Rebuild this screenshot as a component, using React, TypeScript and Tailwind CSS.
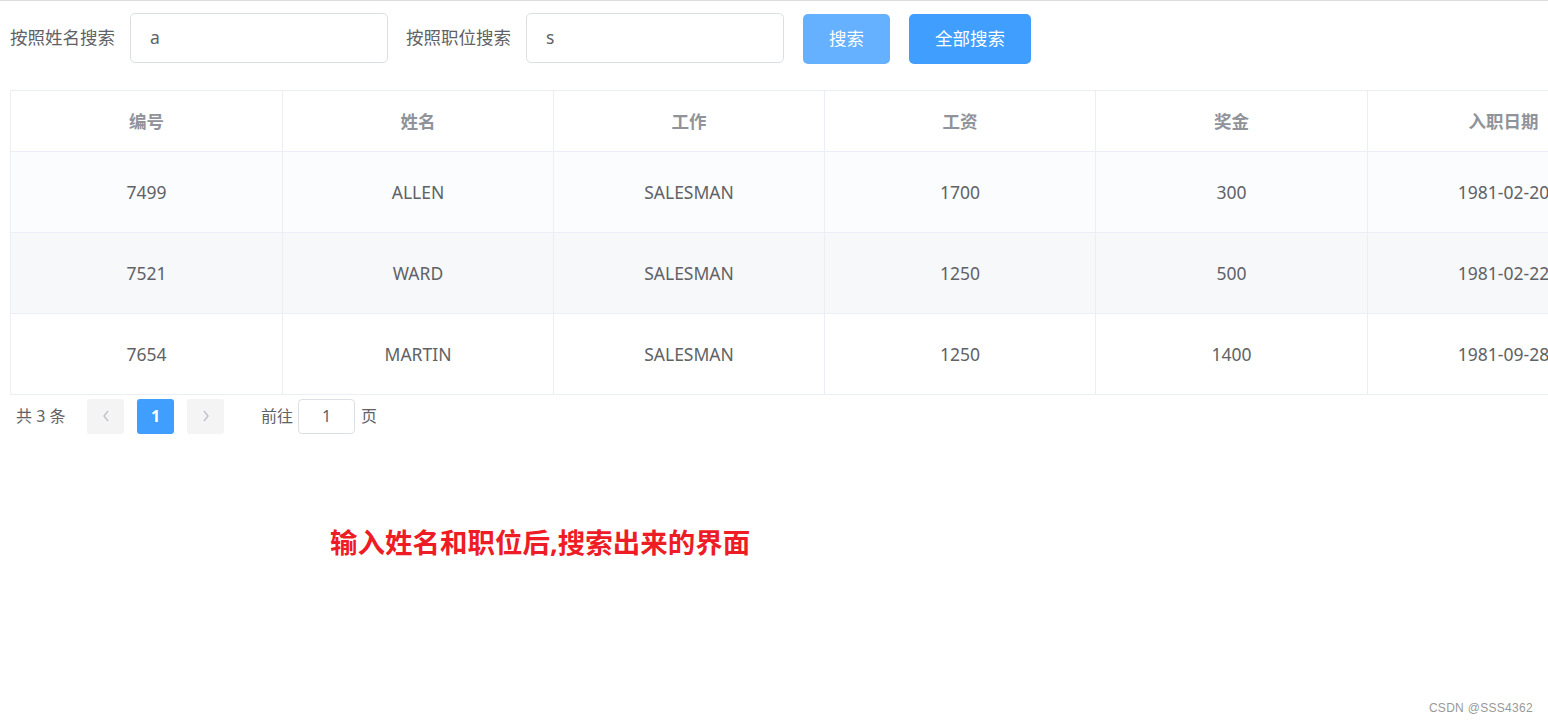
import React from "react";

const rows = [
  ["7499", "ALLEN", "SALESMAN", "1700", "300", "1981-02-20"],
  ["7521", "WARD", "SALESMAN", "1250", "500", "1981-02-22"],
  ["7654", "MARTIN", "SALESMAN", "1250", "1400", "1981-09-28"],
];
const heads = ["编号", "姓名", "工作", "工资", "奖金", "入职日期"];
const rowBg = ["bg-[#fbfcfd]", "bg-[#f7f8fa]", "bg-white"];

export default function App() {
  return (
    <div
      className="w-[1548px] h-[724px] bg-white relative overflow-hidden border-t border-[#dcdcdc]"
      style={{ fontFamily: '"Noto Sans", "Noto Sans CJK SC", sans-serif' }}
    >
      <div className="flex items-center pl-[10px] pt-[11px] h-[62px]">
        <span className="w-[106px] text-[17.5px] text-[#606266] leading-none">按照姓名搜索</span>
        <div className="ml-[14px] w-[258px] h-[50px] border border-[#dcdfe6] rounded-[5px] flex items-center pl-[19px] text-[17.5px] text-[#606266]">a</div>
        <span className="ml-[18px] w-[106px] text-[17.5px] text-[#606266] leading-none">按照职位搜索</span>
        <div className="ml-[14px] w-[258px] h-[50px] border border-[#dcdfe6] rounded-[5px] flex items-center pl-[19px] text-[17.5px] text-[#606266]">s</div>
        <div className="ml-[19px] mt-[2px] w-[87px] h-[50px] rounded-[5px] bg-[#66b1ff] text-white text-[17.5px] flex items-center justify-center">搜索</div>
        <div className="ml-[19px] mt-[2px] w-[122px] h-[50px] rounded-[5px] bg-[#409eff] text-white text-[17.5px] flex items-center justify-center">全部搜索</div>
      </div>

      <div className="ml-[10px] mt-[27px] w-[1700px]">
        <div className="border-t border-l border-[#ebeef5]">
          <div className="grid grid-cols-[272px_271px_271px_271px_272px_272px] h-[61px]">
            {heads.map((h) => (
              <div key={h} className="border-r border-b border-[#ebeef5] flex items-center justify-center font-bold text-[17.5px] text-[#909399]">
                {h}
              </div>
            ))}
          </div>
          {rows.map((r, i) => (
            <div key={i} className={`grid grid-cols-[272px_271px_271px_271px_272px_272px] h-[81px] ${rowBg[i]}`}>
              {r.map((c, j) => (
                <div key={j} className="border-r border-b border-[#ebeef5] flex items-center justify-center text-[17.5px] text-[#606266]">
                  {c}
                </div>
              ))}
            </div>
          ))}
        </div>
      </div>

      <div className="flex items-center pl-[16px] mt-[3px] h-[36px] text-[16px] text-[#606266]">
        <span className="w-[71px]">共 3 条</span>
        <div className="w-[37px] h-[35px] rounded-[3px] bg-[#f4f4f5] flex items-center justify-center text-[#c0c4cc]">
          <svg width="12" height="14" viewBox="0 0 12 14" fill="none" stroke="currentColor" strokeWidth="1.5"><path d="M8 2 L4 7 L8 12" /></svg>
        </div>
        <div className="ml-[13px] w-[37px] h-[35px] rounded-[3px] bg-[#409eff] flex items-center justify-center text-white font-bold">1</div>
        <div className="ml-[13px] w-[37px] h-[35px] rounded-[3px] bg-[#f4f4f5] flex items-center justify-center text-[#c0c4cc]">
          <svg width="12" height="14" viewBox="0 0 12 14" fill="none" stroke="currentColor" strokeWidth="1.5"><path d="M4 2 L8 7 L4 12" /></svg>
        </div>
        <span className="ml-[37px]">前往</span>
        <div className="ml-[5px] w-[57px] h-[35px] border border-[#dcdfe6] rounded-[4px] flex items-center justify-center">1</div>
        <span className="ml-[6px]">页</span>
      </div>

      <div className="pl-[330px] mt-[95px] text-[27.5px] font-bold text-[#ee1c25] leading-none">
        输入姓名和职位后,搜索出来的界面
      </div>

      <div className="absolute right-[15px] bottom-[7px] text-[12px] text-[#999] tracking-[0.3px]" style={{ fontFamily: '"Liberation Sans", sans-serif' }}>
        CSDN @SSS4362
      </div>
    </div>
  );
}
